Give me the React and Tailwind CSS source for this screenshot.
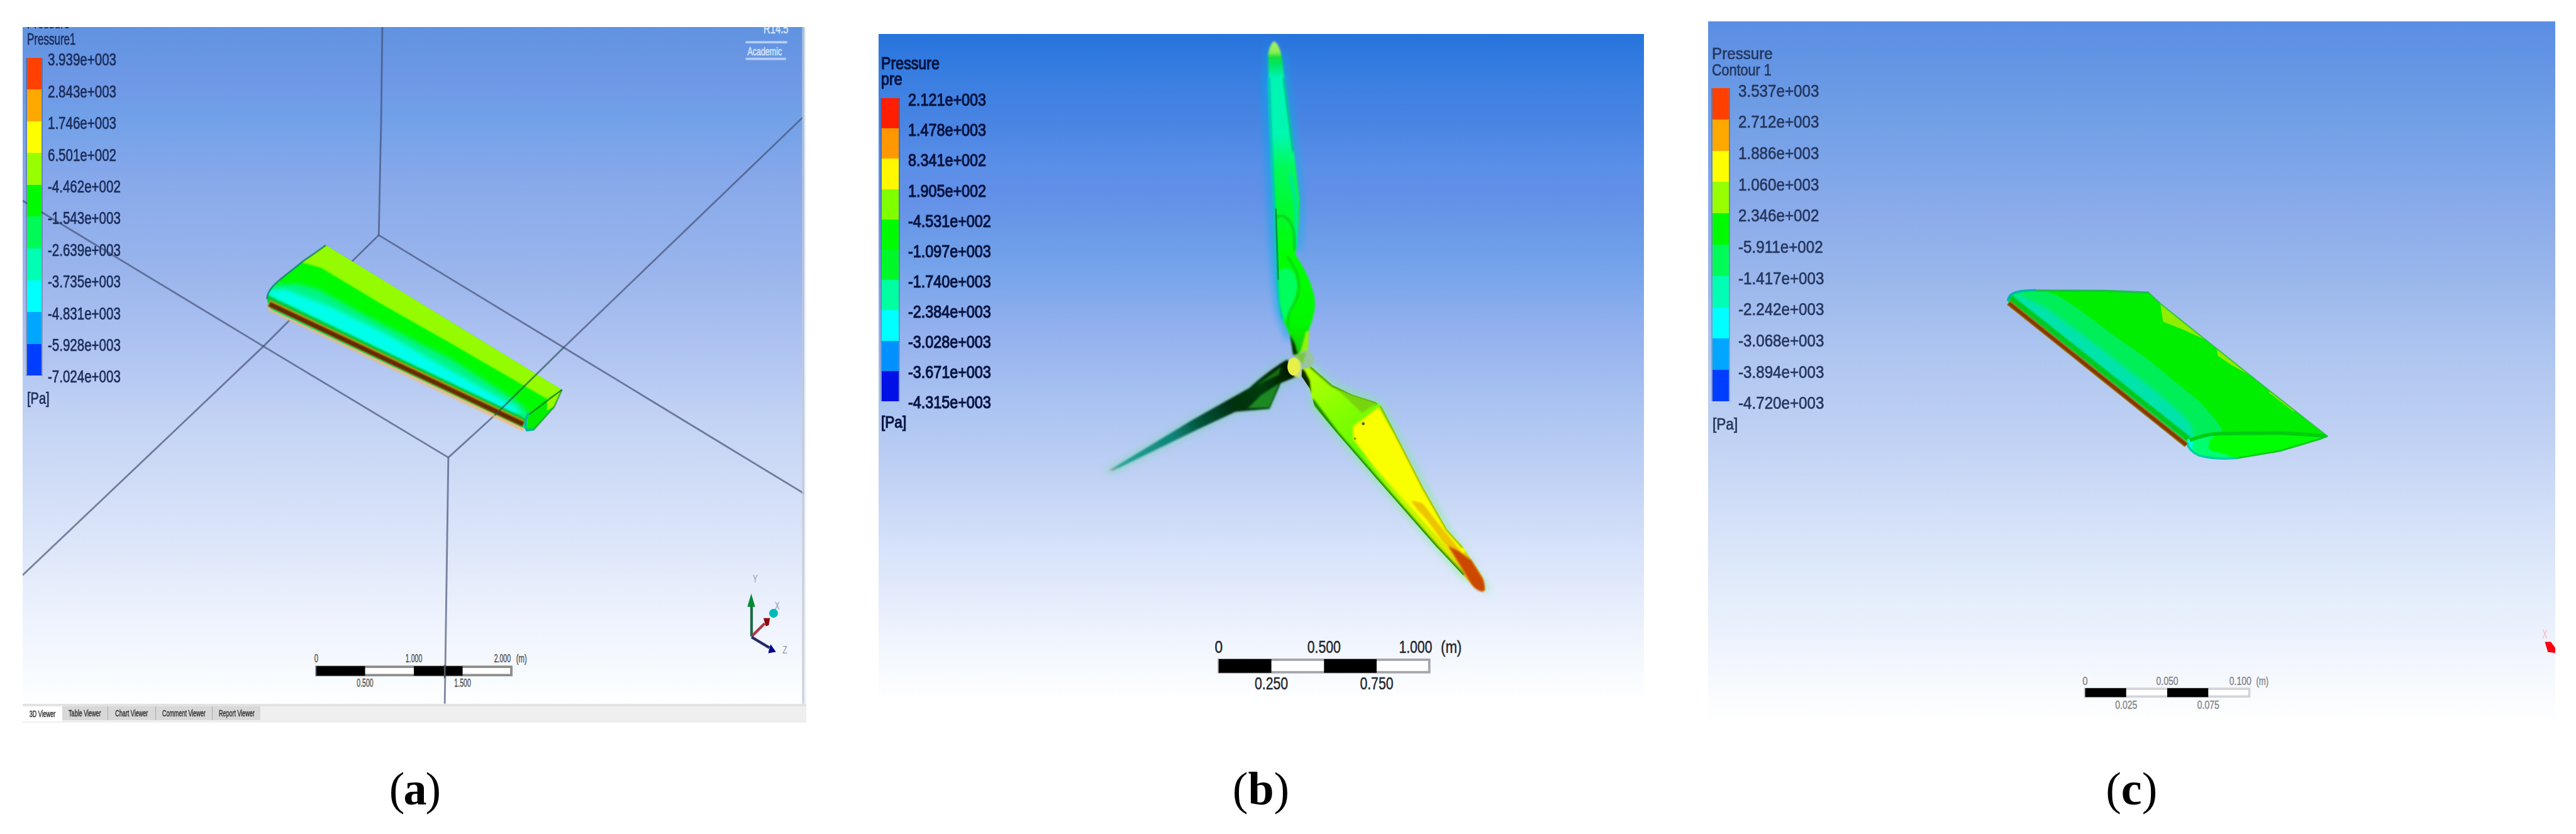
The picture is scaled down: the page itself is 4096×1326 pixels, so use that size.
import clsx from "clsx";

/* ---------------- DATA ---------------- */

const bandsSoft = [
  "bg-[#ff4000]",
  "bg-[#ffa800]",
  "bg-[#ffff00]",
  "bg-[#98ff00]",
  "bg-[#00fa00]",
  "bg-[#00fb58]",
  "bg-[#00ffb4]",
  "bg-[#00ffff]",
  "bg-[#00a6ff]",
  "bg-[#003eff]",
];

const bandsVivid = [
  "bg-[#ff1e00]",
  "bg-[#ff9800]",
  "bg-[#fff800]",
  "bg-[#80ff00]",
  "bg-[#00fa00]",
  "bg-[#00f828]",
  "bg-[#00ffa0]",
  "bg-[#00ffff]",
  "bg-[#0090ff]",
  "bg-[#0010e6]",
];

const valuesA = [
  "3.939e+003", "2.843e+003", "1.746e+003", "6.501e+002", "-4.462e+002", "-1.543e+003",
  "-2.639e+003", "-3.735e+003", "-4.831e+003", "-5.928e+003", "-7.024e+003",
];

const valuesB = [
  "2.121e+003", "1.478e+003", "8.341e+002", "1.905e+002", "-4.531e+002", "-1.097e+003",
  "-1.740e+003", "-2.384e+003", "-3.028e+003", "-3.671e+003", "-4.315e+003",
];

const valuesC = [
  "3.537e+003", "2.712e+003", "1.886e+003", "1.060e+003", "2.346e+002", "-5.911e+002",
  "-1.417e+003", "-2.242e+003", "-3.068e+003", "-3.894e+003", "-4.720e+003",
];

const tabs = [
  { label: "3D Viewer", box: "w-[63px] bg-white h-[24px]" },
  { label: "Table Viewer", box: "w-[72px] bg-[#d8d8d8] h-[22px]" },
  { label: "Chart Viewer", box: "w-[76px] bg-[#d8d8d8] h-[22px] border-l border-[#a8a8a8]" },
  { label: "Comment Viewer", box: "w-[90px] bg-[#d8d8d8] h-[22px] border-l border-[#a8a8a8]" },
  { label: "Report Viewer", box: "w-[77px] bg-[#d8d8d8] h-[22px] border-l border-[#a8a8a8]" },
];

/* ---------------- SHARED PARTS ---------------- */

function Legend({ titles, values, bands, className, titleClass, bodyClass, barClass, labelsClass, rowClass, textClass, unitClass }) {
  return (
    <div className={clsx("relative flex flex-col whitespace-nowrap", className)}>
      <div className={clsx("flex flex-col", titleClass)}>
        {titles.map(title => (
          <span key={title.text} className={clsx("origin-left", title.scale)}>{title.text}</span>
        ))}
      </div>

      <div className={clsx("flex items-start", bodyClass)}>
        <div className={clsx("flex flex-col border-x-2 border-black/20", barClass)}>
          {bands.map(band => (
            <div key={band} className={clsx("flex-1", band)} />
          ))}
        </div>
        <ul className={clsx("flex flex-col", labelsClass)}>
          {values.map(value => (
            <li key={value} className={clsx("flex items-center", rowClass)}>
              <span className={clsx("origin-left", textClass)}>{value}</span>
            </li>
          ))}
        </ul>
      </div>

      <span className={clsx("origin-left", unitClass)}>[Pa]</span>
    </div>
  );
}

function ScaleBar({ x, y, width, height, edge, color, size, labelWidth, unitWidth, endX, unitX, top, bottom, topY, bottomY }) {
  const quarter = width / 4;
  return (
    <g fontFamily="Liberation Sans, Arial, sans-serif" fontSize={size} fill={color} stroke={color} strokeWidth="0.5" textAnchor="middle">
      <rect x={x} y={y} width={width} height={height} fill="#fff" stroke={edge} strokeWidth="4" />
      <rect x={x} y={y - 1} width={quarter} height={height + 2} fill="#000" stroke="none" />
      <rect x={x + quarter * 2} y={y - 1} width={quarter} height={height + 2} fill="#000" stroke="none" />
      <text x={x} y={topY} textLength={labelWidth / 4.2} lengthAdjust="spacingAndGlyphs">0</text>
      <text x={x + quarter * 2} y={topY} textLength={labelWidth} lengthAdjust="spacingAndGlyphs">{top[0]}</text>
      <text x={endX} y={topY} textLength={labelWidth} lengthAdjust="spacingAndGlyphs">{top[1]}</text>
      <text x={unitX} y={topY} textLength={unitWidth} lengthAdjust="spacingAndGlyphs">(m)</text>
      <text x={x + quarter} y={bottomY} textLength={labelWidth} lengthAdjust="spacingAndGlyphs">{bottom[0]}</text>
      <text x={x + quarter * 3} y={bottomY} textLength={labelWidth} lengthAdjust="spacingAndGlyphs">{bottom[1]}</text>
    </g>
  );
}

function Caption({ letter, className }) {
  return (
    <figcaption className={clsx("font-['Liberation_Serif',serif] text-[74px] leading-[80px] text-black", className)}>
      (<b>{letter}</b>)
    </figcaption>
  );
}

/* ---------------- DRAWINGS ---------------- */

function WingA() {
  return (
    <svg className="absolute inset-0 h-full w-full" viewBox="38 45 1318 1170" preserveAspectRatio="none">
      <defs>
        <filter id="softA" x="-10%" y="-10%" width="120%" height="120%">
          <feGaussianBlur stdDeviation="4" />
        </filter>
        <filter id="edgeA" x="-5%" y="-5%" width="110%" height="110%">
          <feGaussianBlur stdDeviation="1.2" />
        </filter>
        <clipPath id="clipA">
          <path d="M548 412 L511 438 L473 468 L457 483 Q449 492 449 506 L456 520 L880 719 L897 723 L932 684 L945 655 Z" />
        </clipPath>
      </defs>

      {/* domain edges */}
      <g stroke="#3f4c70" strokeOpacity="0.66" strokeWidth="3" fill="none">
        <path d="M643 45 L641 200 L637 395" />
        <path d="M637 395 L591 440" />
        <path d="M637 395 L948 584 L1353 830" />
        <path d="M487 538 L443 582 L38 967" />
        <path d="M38 337 L443 582 L754 769" />
        <path d="M754 769 L832 698" />
        <path d="M948 584 L1350 197" />
        <path d="M754 769 L748 1183" />
      </g>

      {/* wing */}
      <path d="M453 516 L882 719" stroke="#f4b860" strokeWidth="13" opacity="0.7" fill="none" filter="url(#edgeA)" />
      <g clipPath="url(#clipA)">
        <rect x="440" y="400" width="520" height="340" fill="#00fb00" />
        <g filter="url(#edgeA)">
          <path d="M548 405 L505 440 L540 450 L640 510 L760 578 L921 671 L950 690 L970 640 Z" fill="#94fb00" />
        </g>
        <path d="M440 482 L470 478 L500 477 L535 486 L630 538 L760 604 L860 668 Q886 684 888 696 L884 740 L440 520 Z" fill="#00f586" filter="url(#softA)" />
        <path d="M452 492 L480 490 L553 518 L640 560 L750 622 L868 688 L864 694 L740 638 L620 576 L520 526 Z" fill="#00ffea" stroke="#00ffea" strokeWidth="7" filter="url(#softA)" />
        <path d="M448 500 L884 708" stroke="#00c83c" strokeWidth="9" fill="none" filter="url(#edgeA)" />
        <path d="M890 695 L920 670 L945 655 L932 684 L897 725 L884 724 Z" fill="#00f000" />
        <path d="M920 671 L948 654 L934 682 L920 690 Z" fill="#94fb00" />
      </g>
      <path d="M452 509 L880 712" stroke="#d09a10" strokeWidth="11" fill="none" filter="url(#edgeA)" />
      <path d="M453 511 L880 713" stroke="#622a00" strokeWidth="8" fill="none" filter="url(#edgeA)" />
      <path d="M548 412 L511 438 L473 468 Q449 487 449 502" stroke="#00786c" strokeOpacity="0.7" strokeWidth="3" fill="none" />
      <path d="M945 655 L932 684 L897 723" stroke="#1c8c3c" strokeOpacity="0.6" strokeWidth="3" fill="none" />
      <path d="M945 655 L889 697" stroke="#176a18" strokeOpacity="0.8" strokeWidth="2.500" fill="none" />
      <path d="M889 694 Q880 712 886 723 L897 722" stroke="#00b8a0" strokeWidth="4" fill="none" />
      <path d="M948 584 L832 698" stroke="#20504c" strokeOpacity="0.65" strokeWidth="3" />

      {/* axis triad */}
      <g fill="none" strokeWidth="4.5">
        <path d="M1264 1070 V1018" stroke="#1f6b45" />
        <path d="M1264 1070 L1286 1048" stroke="#a83848" />
        <path d="M1264 1071 L1294 1089" stroke="#282868" />
      </g>
      <path d="M1263.500 998 L1257 1020 H1270 Z" fill="#008a30" />
      <path d="M1284 1039 L1295 1039 L1293 1051 L1288 1053 Z" fill="#8a0a10" />
      <circle cx="1301" cy="1031" r="7.500" fill="#00bcb8" />
      <path d="M1296 1083 L1305 1096 L1292 1098 Z" fill="#00008c" />
      <g fontFamily="Liberation Sans, Arial, sans-serif" fontSize="17" fill="#8e96a8" textAnchor="middle">
        <text x="1270" y="979" textLength="8" lengthAdjust="spacingAndGlyphs">Y</text>
        <text x="1307" y="1025" textLength="8" lengthAdjust="spacingAndGlyphs">X</text>
        <text x="1320" y="1099" textLength="8" lengthAdjust="spacingAndGlyphs">Z</text>
      </g>

      {/* release mark */}
      <g fontFamily="Liberation Sans, Arial, sans-serif" fill="#d6e6fb" stroke="#d6e6fb" strokeWidth="0.6" textAnchor="middle">
        <text x="1305" y="56" fontSize="24" textLength="42" lengthAdjust="spacingAndGlyphs">R14.5</text>
        <text x="1286" y="93" fontSize="20" textLength="58" lengthAdjust="spacingAndGlyphs">Academic</text>
      </g>
      <path d="M1254 70.500 H1324 M1254 98.500 H1322" stroke="#b4cdf5" strokeWidth="4" />

      <ScaleBar
        x={532} y={1121} width={328} height={14} edge="#8c8c8c" color="#555" size={19} labelWidth={28} unitWidth={18}
        endX={845} unitX={877} top={["1.000", "2.000"]} bottom={["0.500", "1.500"]} topY={1113} bottomY={1155}
      />
      <path d="M748 1118 V1140" stroke="#555" strokeWidth="3" />
      <path d="M1351 45 V1183" stroke="#c4c8d4" strokeOpacity="0.8" strokeWidth="4" />
      <path d="M1355 45 V1183" stroke="#eef6fd" strokeWidth="4" />
    </svg>
  );
}

function Turbine() {
  return (
    <svg className="absolute inset-0 h-full w-full" viewBox="1477 56.5 1287 1115" preserveAspectRatio="none">
      <defs>
        <linearGradient id="bladeTop" gradientUnits="userSpaceOnUse" x1="0" y1="66" x2="0" y2="600">
          <stop offset="0" stopColor="#a4f070" />
          <stop offset="0.04" stopColor="#8cf050" />
          <stop offset="0.055" stopColor="#0ce03c" />
          <stop offset="0.085" stopColor="#00e870" />
          <stop offset="0.12" stopColor="#00f4b4" />
          <stop offset="0.3" stopColor="#00f8b0" />
          <stop offset="0.4" stopColor="#00fa58" />
          <stop offset="0.56" stopColor="#00fc28" />
          <stop offset="0.68" stopColor="#00ff00" />
          <stop offset="0.9" stopColor="#00f800" />
          <stop offset="1" stopColor="#20c010" />
        </linearGradient>
        <linearGradient id="bladeLeft" gradientUnits="userSpaceOnUse" x1="1866" y1="791" x2="2164" y2="620">
          <stop offset="0" stopColor="#a09c98" />
          <stop offset="0.05" stopColor="#2aa49c" />
          <stop offset="0.35" stopColor="#0a8478" />
          <stop offset="0.5" stopColor="#04543c" />
          <stop offset="0.68" stopColor="#003010" />
          <stop offset="0.85" stopColor="#063c08" />
          <stop offset="1" stopColor="#001c04" />
        </linearGradient>
        <linearGradient id="bladeRight" gradientUnits="userSpaceOnUse" x1="2200" y1="620" x2="2480" y2="970">
          <stop offset="0" stopColor="#b4ff00" />
          <stop offset="0.2" stopColor="#84ff00" />
          <stop offset="0.36" stopColor="#68fa00" />
          <stop offset="0.6" stopColor="#b8fa00" />
          <stop offset="0.85" stopColor="#d8e800" />
          <stop offset="1" stopColor="#e0c020" />
        </linearGradient>
        <filter id="haloB" x="-30%" y="-30%" width="160%" height="160%">
          <feGaussianBlur stdDeviation="6" />
        </filter>
        <filter id="edgeB" x="-10%" y="-10%" width="120%" height="120%">
          <feGaussianBlur stdDeviation="1.5" />
        </filter>
        <clipPath id="clipB">
          <path d="M2203 615 L2240 647 L2273 663 L2313 676 L2322 682 L2347 730 L2393 820 L2433 890 L2460 920 L2493 970 L2497 993 L2480 988 L2460 967 L2413 917 L2313 803 L2247 727 L2210 683 L2202 653 L2188 632 L2188 620 Z" />
        </clipPath>
      </defs>

      {/* upper blade */}
      <path d="M2137 80 L2128 140 L2133 260 L2141 420 L2150 520 L2168 570" stroke="#00a8ec" strokeOpacity="0.65" strokeWidth="11" fill="none" filter="url(#haloB)" />
      <path d="M2156 90 L2168 180 L2180 270 L2188 350 L2183 420" stroke="#00b4e0" strokeOpacity="0.6" strokeWidth="9" fill="none" filter="url(#haloB)" />
      <path d="M2141 69 Q2134 76 2132 92 L2133 150 L2137 240 L2143 363 L2148 478 Q2151 515 2157 537 L2170 567 L2176 597 L2188 597 L2198 562 L2203 547 Q2210 530 2211 510 Q2211 495 2201 470 Q2192 448 2178 428 L2183 375 L2185 338 L2176 259 L2162 149 L2155 95 Q2150 70 2141 69 Z" fill="url(#bladeTop)" filter="url(#edgeB)" />
      <path d="M2133 130 L2137 240 L2143 363 L2148 478 Q2151 515 2157 537" stroke="#00c8b8" strokeWidth="5" fill="none" filter="url(#edgeB)" />
      <path d="M2168 290 L2179 340 L2180 415" stroke="#00e890" strokeWidth="7" fill="none" filter="url(#edgeB)" />
      <path d="M2150 455 Q2172 440 2180 470 Q2184 490 2170 520 L2160 540 L2152 510 Z" fill="#00ff5c" filter="url(#edgeB)" />
      <path d="M2146 364 Q2162 358 2172 378 Q2178 395 2176 420" stroke="#08c420" strokeWidth="3" fill="none" filter="url(#edgeB)" />
      <path d="M2164 430 Q2186 460 2184 486 Q2182 502 2170 520 Q2164 530 2166 550" stroke="#08cc1c" strokeWidth="3" fill="none" filter="url(#edgeB)" />
      <path d="M2145 350 L2149 470" stroke="#046830" strokeOpacity="0.7" strokeWidth="2.500" fill="none" />
      <path d="M2158 130 L2167 200 L2174 255" stroke="#00a880" strokeWidth="2.500" fill="none" filter="url(#edgeB)" />
      <path d="M2169 562 L2177 578 L2182 596 L2174 596 Z" fill="#043404" filter="url(#edgeB)" />
      <path d="M2196 556 L2201 556 L2199 590 L2184 600 Z" fill="#90f410" filter="url(#edgeB)" />

      {/* left blade */}
      <path d="M2164 604 Q2130 624 2100 652 L2004 706 L1866 790 L1871 791 L2013 722 L2077 692 L2134 686 L2153 644 L2182 634 Z" stroke="#70d8a0" strokeOpacity="0.5" strokeWidth="8" fill="none" filter="url(#haloB)" />
      <path d="M2164 604 Q2130 624 2100 652 L2004 706 L1864 791 L1871 791 L2013 722 L2077 692 L2134 687 L2153 644 L2182 632 Z" fill="url(#bladeLeft)" filter="url(#edgeB)" />
      <path d="M2151 644 L2134 685 L2098 686 L2120 664 Z" fill="#1c8820" filter="url(#edgeB)" />
      <path d="M2154 616 L2112 648 L2150 630 Z" fill="#126c12" filter="url(#edgeB)" />

      {/* right blade */}
      <path d="M2203 615 L2240 647 L2320 680 L2347 730 L2433 890 L2495 985 L2460 967 L2313 803 L2210 683 Z" stroke="#80f090" strokeOpacity="0.7" strokeWidth="9" fill="none" filter="url(#haloB)" />
      <g clipPath="url(#clipB)">
        <rect x="2180" y="600" width="330" height="400" fill="url(#bladeRight)" />
        <path d="M2318 684 L2292 704 L2275 716 L2275 738 L2313 788 L2375 856 L2450 940 L2470 920 L2393 810 L2347 732 Z" fill="#faff00" filter="url(#edgeB)" />
        <path d="M2373 841 L2392 846 L2414 875 L2446 914 L2480 960 L2458 950 L2424 908 L2398 872 Q2376 850 2373 841 Z" fill="#ecc400" filter="url(#edgeB)" />
        <path d="M2203 615 L2240 647 L2273 663 L2315 677" stroke="#4c9c08" strokeWidth="6" fill="none" filter="url(#edgeB)" />
        <path d="M2250 656 L2315 678 L2290 694 Z" fill="#78d410" filter="url(#edgeB)" />
        <path d="M2206 672 L2247 727 L2313 803 L2413 917 L2460 967" stroke="#188c10" strokeWidth="6" fill="none" filter="url(#edgeB)" />
        <path d="M2322 682 L2347 730 L2393 820 L2433 890 L2460 920" stroke="#88a808" strokeWidth="4" fill="none" filter="url(#edgeB)" />
        <path d="M2188 618 L2194 624 L2202 640 L2204 660 L2186 636 Z" fill="#0c2c04" filter="url(#edgeB)" />
      </g>
      <path d="M2435 918 L2452 926 L2474 942 L2494 975 Q2498 990 2495 994 Q2484 996 2474 982 L2456 952 Z" fill="#cc4600" filter="url(#edgeB)" />
      <circle cx="2292" cy="712" r="2.500" fill="#3c7008" />
      <circle cx="2278" cy="737" r="2" fill="#70a008" />

      {/* hub */}
      <ellipse cx="2195" cy="604" rx="14" ry="15" fill="#98c4a0" filter="url(#edgeB)" />
      <path d="M2176 596 L2196 592 L2190 612 Z" fill="#78c83c" filter="url(#edgeB)" />
      <path d="M2172 602 Q2188 600 2188 618 L2186 634 L2176 634 Z" fill="#d0dc84" filter="url(#edgeB)" />
      <ellipse cx="2175" cy="616" rx="10.500" ry="15" fill="#e8f048" />

      <ScaleBar
        x={2049} y={1109} width={354} height={21} edge="#a4a4ac" color="#22242c" size={29} labelWidth={56} unitWidth={35}
        endX={2380} unitX={2440} top={["0.500", "1.000"]} bottom={["0.250", "0.750"]} topY={1097} bottomY={1159}
      />
    </svg>
  );
}

function WingC() {
  return (
    <svg className="absolute inset-0 h-full w-full" viewBox="2872 36 1425 1179" preserveAspectRatio="none">
      <defs>
        <filter id="edgeC" x="-10%" y="-10%" width="120%" height="120%">
          <feGaussianBlur stdDeviation="1.3" />
        </filter>
        <filter id="softC" x="-10%" y="-10%" width="120%" height="120%">
          <feGaussianBlur stdDeviation="3.5" />
        </filter>
        <clipPath id="clipC">
          <path d="M3376 508 Q3378 494 3391 491 Q3405 488 3423 488 L3540 488 L3613 492 L3633 511 L3727 586 L3820 660 L3913 733 L3901 738 L3834 758 L3763 771 Q3720 775 3696 765 Q3680 757 3676 748 Z" />
        </clipPath>
      </defs>

      <g clipPath="url(#clipC)">
        <rect x="3370" y="480" width="550" height="300" fill="#00ee00" />
        <path d="M3370 480 L3436 488 L3460 497 L3490 516 L3550 561 L3617 608 L3650 636 L3696 673 Q3726 704 3736 722 L3730 740 L3676 760 L3370 515 Z" fill="#00ee58" />
        <path d="M3380 498 L3396 496 L3439 517 L3498 560 L3617 652 L3668 696 Q3688 714 3688 736 L3670 738 L3560 650 L3440 554 Z" fill="#00e4ac" filter="url(#softC)" />
        <path d="M3380 500 L3680 738" stroke="#00c81c" strokeWidth="9" fill="none" filter="url(#edgeC)" />
        <path d="M3632 508 L3637 541 L3668 553 L3712 573 Z" fill="#90ee00" />
        <path d="M3727 584 L3729 598 L3751 613 L3790 635 Z" fill="#90ee00" />
        <path d="M3816 658 L3858 690" stroke="#88e800" strokeWidth="5" />
        <path d="M3678 742 L3700 732 L3731 729 L3834 729 L3913 733 L3901 740 L3834 760 L3763 775 L3690 770 Z" fill="#00ff00" />
        <path d="M3678 742 L3700 733 L3726 731 Q3706 745 3718 758 L3752 766 L3740 780 L3680 765 Z" fill="#00ff70" />
        <path d="M3678 738 L3688 738 L3686 758 L3676 752 Z" fill="#00f8e0" />
        <path d="M3682 740 Q3710 729 3735 729 L3834 728 L3913 733" stroke="#00cc10" strokeWidth="6" fill="none" />
      </g>
      <path d="M3613 492 L3633 511 L3727 586 L3820 660 L3913 733" stroke="#1cc034" strokeOpacity="0.7" strokeWidth="2.500" fill="none" />
      <path d="M3376 506 Q3378 494 3391 491 Q3405 488 3423 488" stroke="#00b8a8" strokeWidth="4" fill="none" />
      <path d="M3423 488.500 L3540 489 L3613 492" stroke="#18c048" strokeWidth="3.500" fill="none" />
      <path d="M3677 744 Q3680 757 3696 765 Q3720 773 3763 770" stroke="#00d0a8" strokeWidth="4" fill="none" />
      <path d="M3763 770 L3834 758 L3901 738 L3914 733" stroke="#10c820" strokeWidth="3" fill="none" />
      <path d="M3377 509 L3676 748" stroke="#a07414" strokeWidth="9" fill="none" />
      <path d="M3378 510 L3676 748" stroke="#843800" strokeWidth="5" fill="none" />

      <ScaleBar
        x={3506} y={1158} width={276} height={13} edge="#d4d4d8" color="#85878d" size={20} labelWidth={37} unitWidth={21}
        endX={3767} unitX={3804} top={["0.050", "0.100"]} bottom={["0.025", "0.075"]} topY={1152} bottomY={1192}
      />

      {/* clipped triad */}
      <path d="M4279 1079 L4289 1079 L4297 1090 V1098 L4284 1096 Z" fill="#fa0010" />
      <text x="4279" y="1073" fontFamily="Liberation Sans, Arial, sans-serif" fontSize="21" fill="#f8b8c0" textAnchor="middle" textLength="9" lengthAdjust="spacingAndGlyphs">X</text>
    </svg>
  );
}

/* ---------------- PAGE ---------------- */

export default function App() {
  return (
    <main className="flex h-[1326px] w-[4096px] overflow-hidden bg-white font-['Liberation_Sans',Arial,sans-serif]">
      <figure className="ml-[36px] flex h-full w-[1246px] flex-col items-center justify-between pt-[42.5px] pb-[32px]">
        <div className="relative flex h-[1106px] w-full flex-col justify-between overflow-hidden bg-[#efefef]">
          <div className="absolute inset-x-0 top-0 h-[1076px] bg-[linear-gradient(180deg,#6093e1_0%,#7099e6_9%,#70a0e8_13%,#86a8ea_22%,#9ab5ec_36%,#b1c5f2_49%,#c2d3f4_58%,#cddaf6_65%,#dfe8fa_78%,#edf2fd_87%,#fdffff_100%)]" />
          <WingA />
          <Legend
            titles={[
              { text: "Pressure", scale: "scale-x-[0.68]" },
              { text: "Pressure1", scale: "scale-x-[0.68]" },
            ]}
            values={valuesA}
            bands={bandsSoft}
            className="-mt-[19.5px] text-[#1b2c58] [-webkit-text-stroke:0.7px_#1b2c58]"
            titleClass="ml-[7px] text-[25px] leading-[26px]"
            bodyClass="mt-[16.5px] ml-[5px] h-[506px]"
            barClass="h-[506px] w-[27px]"
            labelsClass="ml-[8px] -mt-[21px]"
            rowClass="h-[50.4px]"
            textClass="text-[27px] scale-x-[0.76]"
            unitClass="ml-[7px] mt-[19px] text-[25px] leading-[32px] scale-x-[0.8]"
          />
          <div className="relative flex h-[30px] items-start border-t-4 border-[#e3e3e3]">
            {tabs.map(tab => (
              <div key={tab.label} className={clsx("flex items-center justify-center", tab.box)}>
                <span className="scale-x-[0.6] whitespace-nowrap text-[15px] leading-none text-[#333] [-webkit-text-stroke:0.5px_#333]">{tab.label}</span>
              </div>
            ))}
          </div>
        </div>
        <Caption letter="a" className="tracking-[-2px]" />
      </figure>

      <figure className="ml-[114.5px] flex h-full w-[1217px] flex-col items-center justify-between pt-[53.5px] pb-[32px]">
        <div className="relative h-[1054px] w-full overflow-hidden bg-[linear-gradient(180deg,#2674dd_0%,#3a7fe1_7%,#4b85e3_14%,#5a8fe8_20%,#628fe7_24%,#6b9ae8_30%,#74a3ea_35%,#94b1ee_45%,#aec6f2_58%,#c3d3f5_68%,#d7e3fa_78%,#e8eefc_87%,#f4f8fe_94%,#fdfeff_100%)]">
          <Turbine />
          <Legend
            titles={[
              { text: "Pressure", scale: "scale-x-[0.86]" },
              { text: "pre", scale: "scale-x-[0.86]" },
            ]}
            values={valuesB}
            bands={bandsVivid}
            className="pt-[35px] text-[#061440] [-webkit-text-stroke:1.2px_#061440]"
            titleClass="ml-[4px] text-[27px] leading-[25px]"
            bodyClass="mt-[17.5px] ml-[3px] h-[482px]"
            barClass="h-[482px] w-[31px]"
            labelsClass="ml-[13px] -mt-[20.5px]"
            rowClass="h-[48.1px]"
            textClass="text-[27px] scale-x-[0.865]"
            unitClass="ml-[4px] mt-[17px] text-[26px] leading-[32px] scale-x-[0.87]"
          />
        </div>
        <Caption letter="b" />
      </figure>

      <figure className="ml-[102px] flex h-full w-[1347.5px] flex-col items-center justify-between pt-[34px] pb-[32px]">
        <div className="relative h-[1115px] w-full overflow-hidden bg-[linear-gradient(180deg,#5a8ee3_0%,#719fe6_14%,#8aabea_27%,#9cb8ec_38%,#afc6f0_48%,#c3d3f4_61%,#d2dff8_70%,#e5eefb_83%,#f0f4fd_90%,#f9fbfe_96%,#ffffff_100%)]">
          <WingC />
          <Legend
            titles={[
              { text: "Pressure", scale: "scale-x-[0.93]" },
              { text: "Contour 1", scale: "scale-x-[0.83]" },
            ]}
            values={valuesC}
            bands={bandsSoft}
            className="pt-[39px] text-[#26375f] [-webkit-text-stroke:0.7px_#26375f]"
            titleClass="ml-[6px] text-[26px] leading-[25.5px]"
            bodyClass="mt-[16px] ml-[5px] h-[498px]"
            barClass="h-[498px] w-[30px]"
            labelsClass="ml-[13px] -mt-[20px]"
            rowClass="h-[49.7px]"
            textClass="text-[27px] scale-x-[0.895]"
            unitClass="ml-[7px] mt-[20px] text-[26px] leading-[32px] scale-x-[0.87]"
          />
        </div>
        <Caption letter="c" />
      </figure>
    </main>
  );
}
